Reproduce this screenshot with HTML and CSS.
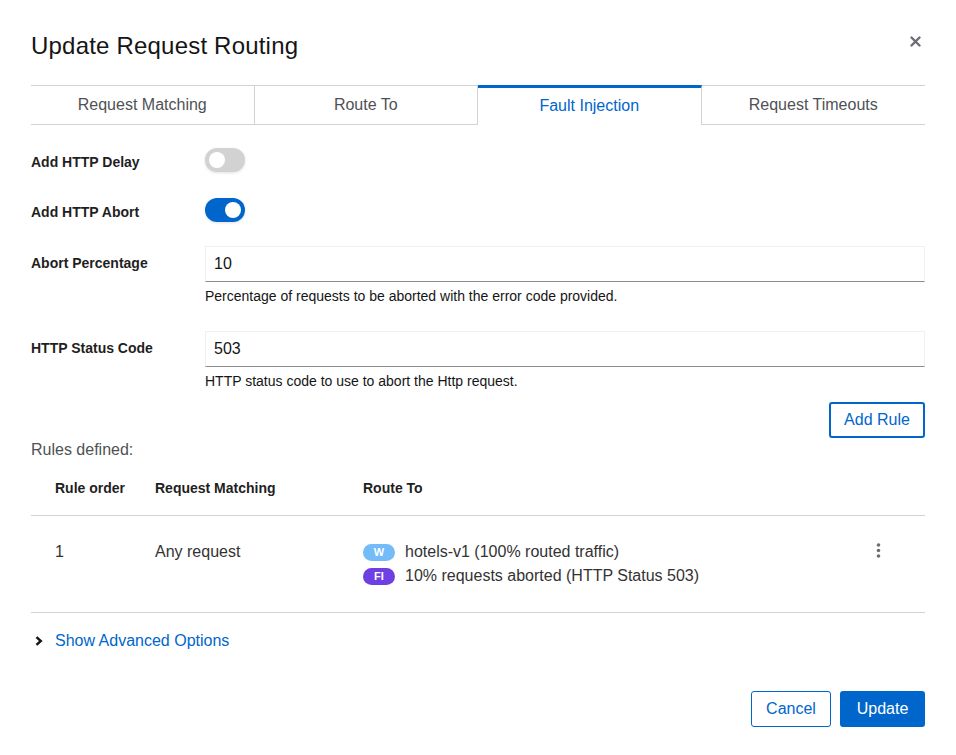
FILE: index.html
```html
<!DOCTYPE html>
<html>
<head>
<meta charset="utf-8">
<link rel="stylesheet" href="styles.css">
</head>
<body>
<div class="modal">
  <header class="modal-header">
    <h1 class="modal-title">Update Request Routing</h1>
    <button class="close" aria-label="Close">
      <svg width="11" height="11" viewBox="0 0 11 11"><path d="M1.5 1.5 L9.5 9.5 M9.5 1.5 L1.5 9.5" stroke="#6a6e73" stroke-width="2.4" stroke-linecap="round"/></svg>
    </button>
  </header>

  <nav class="tabs">
    <div class="tab">Request Matching</div>
    <div class="tab">Route To</div>
    <div class="tab active">Fault Injection</div>
    <div class="tab">Request Timeouts</div>
  </nav>

  <div class="form">
    <div class="row row-switch">
      <div class="label">Add HTTP Delay</div>
      <div class="control"><span class="switch"><span class="knob"></span></span></div>
    </div>
    <div class="row row-switch second">
      <div class="label">Add HTTP Abort</div>
      <div class="control"><span class="switch on"><span class="knob"></span></span></div>
    </div>
    <div class="row row-input">
      <div class="label">Abort Percentage</div>
      <div class="control">
        <div class="input">10</div>
        <div class="helper">Percentage of requests to be aborted with the error code provided.</div>
      </div>
    </div>
    <div class="row row-input second-input">
      <div class="label">HTTP Status Code</div>
      <div class="control">
        <div class="input">503</div>
        <div class="helper">HTTP status code to use to abort the Http request.</div>
      </div>
    </div>
  </div>

  <div class="add-row"><button class="btn btn-secondary add-rule">Add Rule</button></div>

  <div class="rules-title">Rules defined:</div>

  <div class="table">
    <div class="thead">
      <div class="c1">Rule order</div>
      <div class="c2">Request Matching</div>
      <div class="c3">Route To</div>
      <div class="c4"></div>
    </div>
    <div class="trow">
      <div class="c1">1</div>
      <div class="c2">Any request</div>
      <div class="c3">
        <div class="route"><span class="badge b-w">W</span>hotels-v1 (100% routed traffic)</div>
        <div class="route"><span class="badge b-fi">FI</span>10% requests aborted (HTTP Status 503)</div>
      </div>
      <div class="c4">
        <svg width="5" height="16" viewBox="0 0 5 16"><circle cx="2.5" cy="2" r="1.8" fill="#6a6e73"/><circle cx="2.5" cy="7.5" r="1.8" fill="#6a6e73"/><circle cx="2.5" cy="13" r="1.8" fill="#6a6e73"/></svg>
      </div>
    </div>
  </div>

  <div class="advanced">
    <svg class="chev" width="8" height="10" viewBox="0 0 8 10"><path d="M1.5 1.2 L5.8 5 L1.5 8.8" fill="none" stroke="#151515" stroke-width="2.4"/></svg>
    <span>Show Advanced Options</span>
  </div>

  <footer class="footer">
    <button class="btn btn-link-outline">Cancel</button>
    <button class="btn btn-primary">Update</button>
  </footer>
</div>
</body>
</html>
```

FILE: styles.css
```css
* { box-sizing: border-box; }
body {
  margin: 0;
  background: #fff;
  font-family: "Liberation Sans", Arial, sans-serif;
  color: #151515;
}
.modal {
  width: 956px;
  padding: 0 31px;
}
.modal-header {
  display: flex;
  justify-content: space-between;
  align-items: flex-start;
  height: 85px;
  padding-top: 31px;
}
.modal-title {
  margin: 0;
  font-size: 24px;
  font-weight: 400;
  line-height: 30px;
  letter-spacing: 0.2px;
  color: #151515;
}
.close {
  border: 0;
  background: none;
  padding: 0;
  margin-top: 5px;
  margin-right: 4px;
  width: 11px;
  height: 11px;
}
.close svg { display: block; }

.tabs {
  display: grid;
  grid-template-columns: repeat(4, 1fr);
  height: 40px;
}
.tab {
  display: flex;
  align-items: center;
  justify-content: center;
  font-size: 16px;
  color: #4f5255;
  border-top: 1px solid #d2d2d2;
  border-bottom: 1px solid #d2d2d2;
  border-right: 1px solid #d2d2d2;
}
.tab:last-child { border-right: 0; }
.tab.active {
  color: #0066cc;
  border-top: 3px solid #0066cc;
  border-bottom: 0;
  padding-bottom: 1px;
}

.form { padding-top: 23px; }
.row { display: flex; }
.label {
  width: 174px;
  flex: none;
  font-size: 14px;
  font-weight: 700;
  color: #1f1f1f;
}
.control { flex: 1; }
.row-switch { height: 24px; align-items: center; }
.row-switch .label { margin-top: 3px; }
.row-switch.second { margin-top: 26px; }
.row-input { margin-top: 24px; }
.row-input .label { line-height: 34px; }
.second-input { margin-top: 25px; }

.switch {
  display: block;
  width: 40px;
  height: 24px;
  border-radius: 12px;
  background: #d2d2d2;
  position: relative;
  box-shadow: 0 1px 3px rgba(0,0,0,0.12);
}
.switch .knob {
  position: absolute;
  top: 4px;
  left: 4px;
  width: 16px;
  height: 16px;
  border-radius: 50%;
  background: #fff;
}
.switch.on { background: #0066cc; }
.switch.on .knob { left: 20px; }

.input {
  height: 36px;
  border: 1px solid #f0f0f0;
  border-bottom-color: #8a8d90;
  padding: 0 8px;
  font-size: 16px;
  line-height: 34px;
  color: #151515;
}
.helper {
  margin-top: 4px;
  font-size: 14px;
  line-height: 20px;
  color: #151515;
}

.add-row {
  display: flex;
  justify-content: flex-end;
  margin-top: 11px;
}
.btn {
  font-family: inherit;
  font-size: 16px;
  height: 36px;
  border-radius: 3px;
  background: #fff;
  cursor: pointer;
  white-space: nowrap;
}
.btn-secondary {
  color: #0066cc;
  border: 2px solid #0066cc;
  padding: 0;
  width: 96px;
}
.rules-title {
  font-size: 16px;
  color: #4f5255;
  line-height: 22px;
  margin-top: 1px;
}

.thead, .trow {
  display: flex;
}
.thead {
  height: 55px;
  border-bottom: 1px solid #d2d2d2;
  font-size: 14px;
  font-weight: 700;
  line-height: 20px;
  padding-top: 17px;
  color: #1f1f1f;
}
.c1 { width: 124px; padding-left: 24px; }
.c2 { width: 208px; }
.c3 { flex: 1; }
.c4 { width: 49px; }
.trow {
  height: 97px;
  border-bottom: 1px solid #d2d2d2;
  font-size: 16px;
  line-height: 24px;
  color: #333;
  padding-top: 24px;
}
.route {
  display: flex;
  align-items: center;
  font-size: 16px;
  line-height: 24px;
  color: #333;
}
.badge {
  display: inline-flex;
  align-items: center;
  justify-content: center;
  width: 32px;
  height: 17px;
  border-radius: 9px;
  color: #fff;
  font-size: 11px;
  font-weight: 700;
  margin-right: 10px;
}
.b-w { background: #73bcf7; }
.b-fi { background: #6e40e4; }
.trow .c4 { padding-top: 3px; }
.trow .c4 svg { display: block; }

.advanced {
  display: flex;
  align-items: center;
  margin-top: 16px;
  height: 24px;
  font-size: 16px;
  color: #0066cc;
}
.chev { margin-left: 4px; margin-right: 12px; }

.footer {
  display: flex;
  justify-content: flex-end;
  gap: 9px;
  margin-top: 38px;
}
.btn-link-outline {
  color: #0066cc;
  border: 1px solid #0066cc;
  width: 80px;
}
.btn-primary {
  background: #0066cc;
  color: #fff;
  border: 0;
  width: 85px;
}
```
